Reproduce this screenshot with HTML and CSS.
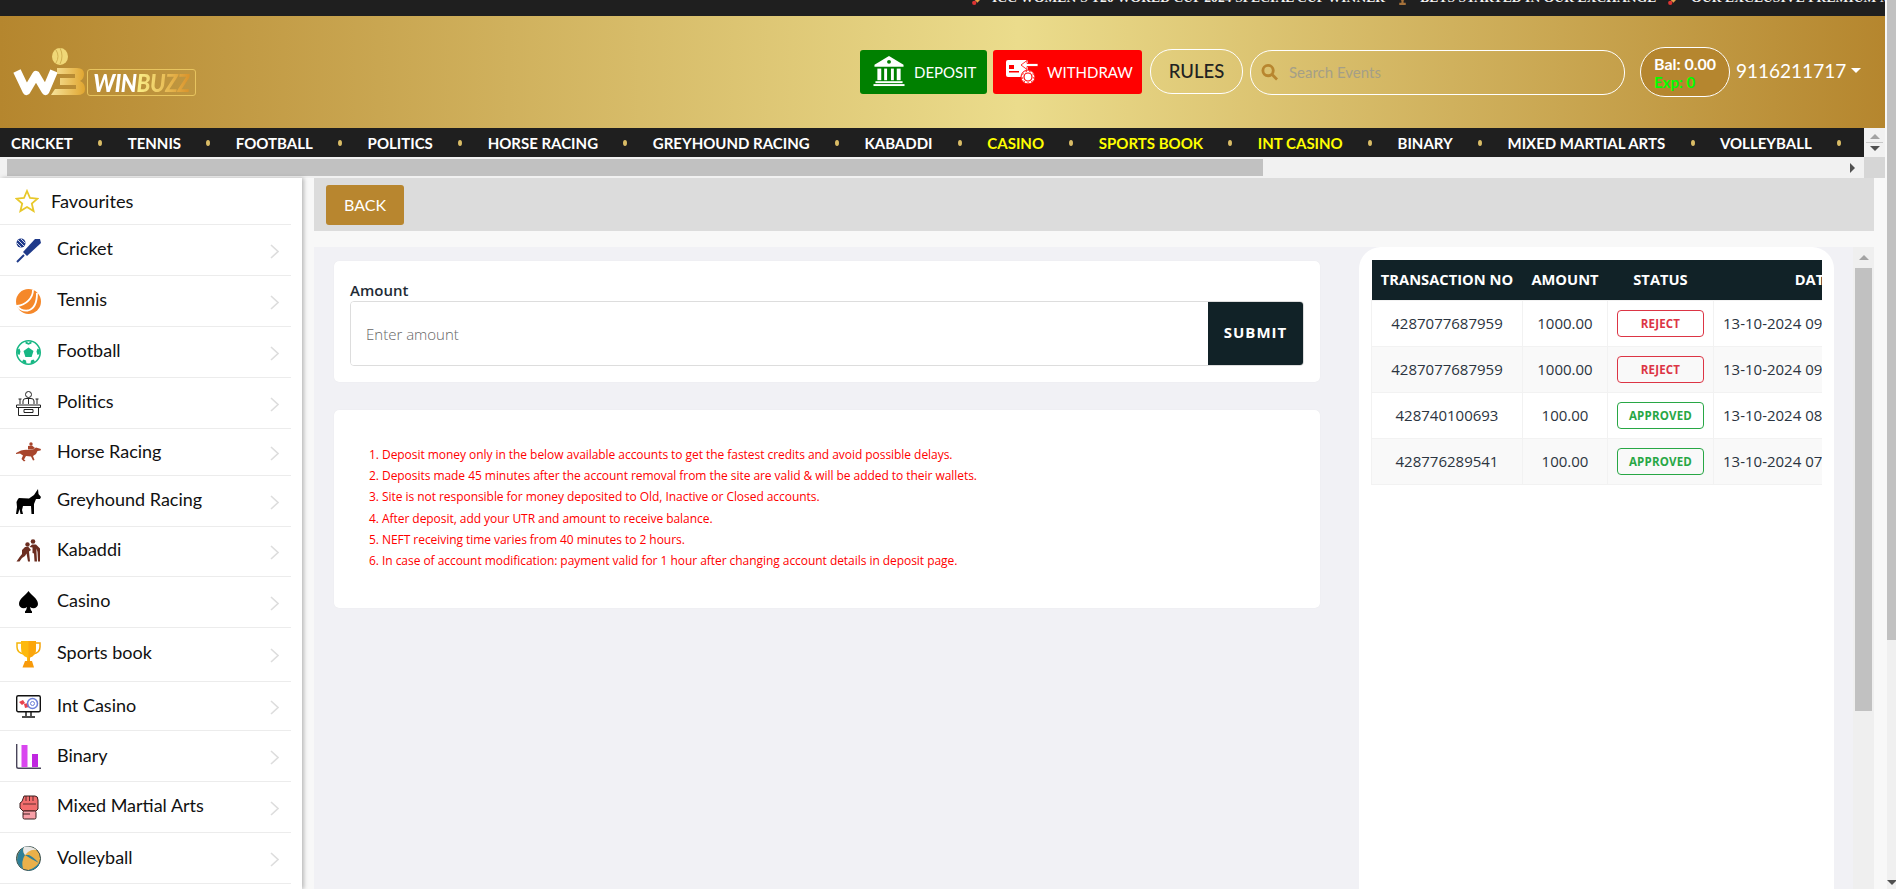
FILE: index.html
```html
<!DOCTYPE html>
<html lang="en">
<head>
<meta charset="utf-8">
<title>Winbuzz - Deposit</title>
<link rel="stylesheet" href="styles.css">
</head>
<body>
<div class="page">
  <div class="topbar">
    <div class="ticker">
      <svg class="tick-ico" viewBox="0 0 12 12"><path d="M9 0 L12 3 L6 10 L2 6Z" fill="#e8a04a"/><circle cx="3" cy="10" r="2" fill="#d33"/></svg>
      <span>ICC WOMEN'S T20 WORLD CUP 2024 SPECIAL CUP WINNER</span>
      <svg class="tick-ico" viewBox="0 0 12 12"><path d="M2 0H10V5L7 8V10H9V12H3V10H5V8L2 5Z" fill="#a5713a"/></svg>
      <span>BETS STARTED IN OUR EXCHANGE</span>
      <svg class="tick-ico" viewBox="0 0 12 12"><path d="M9 0 L12 3 L6 10 L2 6Z" fill="#e8a04a"/><circle cx="3" cy="10" r="2" fill="#d33"/></svg>
      <span>OUR EXCLUSIVE PREMIUM MARKET</span>
    </div>
  </div>

  <header class="header">
    <a class="logo">
      <svg class="logo-mark" viewBox="0 0 74 48">
        <defs>
          <linearGradient id="lg" x1="0" x2="1"><stop offset="0" stop-color="#f7e39a"/><stop offset="1" stop-color="#e0a52f"/></linearGradient>
        </defs>
        <ellipse cx="47" cy="8.500" rx="8" ry="8.500" fill="#f0d878"/>
        <path d="M43 2Q47 8 43 15M47 0Q51 8 47 16" stroke="#c9a648" fill="none" stroke-width=".8"/>
        <polyline points="4,23 13.500,43 23,27 32.500,43 41,23" fill="none" stroke="#fff" stroke-width="8" stroke-linejoin="round"/>
        <path d="M44 20H64Q71 20 71 26Q71 31 67 33Q72 35 72 41Q72 47 64 47H38L42 41H63V37H47V30H62V26H44Z" fill="url(#lg)"/>
      </svg>
      <span class="logo-frame"><span class="logo-text"><span class="logo-win">WIN</span><span class="logo-buzz">BUZZ</span></span></span>
    </a>
    <div class="actions">
      <a class="cash cash-green">
        <svg class="cash-ico" viewBox="0 0 32 32" fill="#fff"><path d="M16 0L31 9V11H1V9Z"/><rect x="4" y="13" width="4" height="12"/><rect x="11" y="13" width="3" height="12"/><rect x="18" y="13" width="3" height="12"/><rect x="24" y="13" width="4" height="12"/><rect x="2" y="26" width="28" height="2"/><rect x="0" y="29" width="32" height="2"/><circle cx="16" cy="6" r="2" fill="#008000"/></svg>
        DEPOSIT
      </a>
      <a class="cash cash-red">
        <svg class="cash-ico-w" viewBox="0 0 32 24" fill="#fff"><rect x="0" y="0" width="22" height="17" rx="2"/><rect x="3" y="5" width="5" height="4" fill="#f00"/><rect x="3" y="11" width="10" height="1.500" fill="#f00"/><path d="M15 5L21 .5V3.500H32V6.500H21V9.500Z" stroke="#f00" stroke-width=".8"/><circle cx="22" cy="17" r="7" stroke="#f00"/><circle cx="22" cy="17" r="4" fill="none" stroke="#f00" stroke-width="1.200"/><circle cx="22" cy="17" r="5.800" fill="none" stroke="#f00" stroke-width="1" stroke-dasharray="1.500 2.500"/></svg>
        WITHDRAW
      </a>
      <a class="rules">RULES</a>
      <label class="search">
        <svg class="search-ico" viewBox="0 0 18 18"><circle cx="7.500" cy="7.500" r="5.500" fill="none" stroke="#b8862f" stroke-width="3"/><path d="M12 12L17 17" stroke="#b8862f" stroke-width="3"/></svg>
        <input class="search-input" placeholder="Search Events">
      </label>
      <div class="balance"><span class="bal">Bal: 0.00</span><span class="exp">Exp: 0</span></div>
      <a class="user">9116211717<i class="caret"></i></a>
    </div>
  </header>

  <div class="nav-row">
    <nav class="nav">
      <a>CRICKET</a><i></i><a>TENNIS</a><i></i><a>FOOTBALL</a><i></i><a>POLITICS</a><i></i><a>HORSE RACING</a><i></i><a>GREYHOUND RACING</a><i></i><a>KABADDI</a><i></i><a class="hot">CASINO</a><i></i><a class="hot">SPORTS BOOK</a><i></i><a class="hot">INT CASINO</a><i></i><a>BINARY</a><i></i><a>MIXED MARTIAL ARTS</a><i></i><a>VOLLEYBALL</a><i></i>
    </nav>
    <div class="nav-spin"><b class="up"></b><span></span><b class="down"></b></div>
  </div>
  <div class="hscroll">
    <div class="htrack"><div class="hthumb"></div><b class="right"></b></div>
    <div class="corner"></div>
  </div>

  <div class="body">
    <aside class="side">
      <a class="fav">
        <svg class="star" viewBox="0 0 24 24"><path d="M12 2L15 9L22.500 9.700L16.800 14.500L18.600 22L12 18L5.400 22L7.200 14.500L1.500 9.700L9 9Z" fill="none" stroke="#e8c82a" stroke-width="1.800"/></svg>
        <span>Favourites</span>
      </a>
      <a class="row"><svg class="ico" viewBox="0 0 25 25"><path d="M24 1L25 5L11 18L7 14L19 1Z" fill="#1f3a8a"/><path d="M8 17L1 24" stroke="#1f3a8a" stroke-width="2"/><circle cx="5" cy="5" r="4.500" fill="#1f3a8a"/><path d="M2 2L8 8M1 5L5 9M5 1L9 5" stroke="#fff" stroke-width=".8"/></svg><span class="lbl">Cricket</span><svg class="chev" viewBox="0 0 9 15"><path d="M1 1L8 7.500L1 14" fill="none" stroke="#ddd" stroke-width="1.600"/></svg></a>
      <a class="row"><svg class="ico" viewBox="0 0 25 25"><circle cx="12.500" cy="12.500" r="12.500" fill="#f5882a"/><path d="M17 1C17 9 10 16 1 17C4 21 8 22 12 21.500C18 20 21 14 21 4" fill="none" stroke="#fff" stroke-width="1.800"/></svg><span class="lbl">Tennis</span><svg class="chev" viewBox="0 0 9 15"><path d="M1 1L8 7.500L1 14" fill="none" stroke="#ddd" stroke-width="1.600"/></svg></a>
      <a class="row"><svg class="ico" viewBox="0 0 25 25"><circle cx="12.500" cy="12.500" r="11.700" fill="#fff" stroke="#17b784" stroke-width="1.600"/><path d="M12.500 7.500L17.500 11L15.600 17H9.400L7.500 11Z M9.500 1L12.500 3L15.500 1L15.500 3.500L12.500 4.800L9.500 3.500Z M1 10L3.500 8.500L4.500 11.500L3.500 15L1.500 14Z M24 10L21.500 8.500L20.500 11.500L21.500 15L23.500 14Z M6 21.500L7.500 19.500L10 20.500L10.500 23.500H8.500Z M19 21.500L17.500 19.500L15 20.500L14.500 23.500H16.500Z" fill="#17b784"/></svg><span class="lbl">Football</span><svg class="chev" viewBox="0 0 9 15"><path d="M1 1L8 7.500L1 14" fill="none" stroke="#ddd" stroke-width="1.600"/></svg></a>
      <a class="row"><svg class="ico" viewBox="0 0 25 25" fill="none" stroke="#222" stroke-width="1"><circle cx="12.500" cy="3.500" r="3"/><path d="M7 13V10Q7 7.500 10 7.500H15Q18 7.500 18 10V13M12.500 8V13M4 8V13M21 8V13M2.500 8L5.500 8M19.500 8L22.500 8"/><path d="M.500 14H24.500V16.500H.500ZM2.500 16.500V24.500H22.500V16.500M8 18.500H17V21.500H8Z"/></svg><span class="lbl">Politics</span><svg class="chev" viewBox="0 0 9 15"><path d="M1 1L8 7.500L1 14" fill="none" stroke="#ddd" stroke-width="1.600"/></svg></a>
      <a class="row row-47"><svg class="ico" viewBox="0 0 25 25" fill="#a8452c"><path d="M0 13L5 10.500Q9 9.500 13 10L17 9.500L20 7.500L25 9L24.500 10.500L21.500 11L20 14L17 16L18.500 20L17 20.500L15 16.500L10 16L8 19.500L9.500 20.500L8 21.500L5.500 19L7 15.500L4 13.500L0 14Z"/><circle cx="15" cy="4" r="1.700"/><path d="M12 6L16 5.500L19 8L16.500 9.500L12 9.500Z"/></svg><span class="lbl lbl-mid">Horse Racing</span><svg class="chev" viewBox="0 0 9 15"><path d="M1 1L8 7.500L1 14" fill="none" stroke="#ddd" stroke-width="1.600"/></svg></a>
      <a class="row"><svg class="ico" viewBox="0 0 25 25" fill="#000"><path d="M18 6L22 0L22.500 5L25 8L24 10L20 10L18 15V25H15.500L15 17H7L6 21L7 25H4.500L3.500 20L2 25H0L1 18L0.500 13L2 10L3 9L13 9.500Z"/></svg><span class="lbl">Greyhound Racing</span><svg class="chev" viewBox="0 0 9 15"><path d="M1 1L8 7.500L1 14" fill="none" stroke="#ddd" stroke-width="1.600"/></svg></a>
      <a class="row row-50"><svg class="ico" viewBox="0 0 25 25" fill="#6b2d20"><circle cx="17" cy="2.500" r="2.300"/><circle cx="11.500" cy="5.500" r="2.200"/><path d="M13.500 8L16 5.500H20L24 9.500V22.500H22L21.500 13L20.500 9.500V13L21 22.500H18.500L18 14.500L16.500 14V8.500Z"/><path d="M12.500 8L15 11L13 12.500L14 22.500H12L10.500 14.500L9 17L6 19L3.500 22.500H0.500L4 17.500L6 15V11L9 8Z"/></svg><span class="lbl">Kabaddi</span><svg class="chev" viewBox="0 0 9 15"><path d="M1 1L8 7.500L1 14" fill="none" stroke="#ddd" stroke-width="1.600"/></svg></a>
      <a class="row"><svg class="ico" viewBox="0 0 25 25" fill="#000"><path d="M12.500 1C15 5 22 8.500 22 14C22 18 17 19.500 14 17Q14.500 20 16 21.500V23H9V21.500Q10.500 20 11 17C8 19.500 3 18 3 14C3 8.500 10 5 12.500 1Z"/></svg><span class="lbl">Casino</span><svg class="chev" viewBox="0 0 9 15"><path d="M1 1L8 7.500L1 14" fill="none" stroke="#ddd" stroke-width="1.600"/></svg></a>
      <a class="row row-54"><svg class="ico ico-tall" viewBox="0 0 25 27"><path d="M5 2H1V6Q1 12 8 13" fill="none" stroke="#f5b50a" stroke-width="1.500"/><path d="M20 2H24V6Q24 12 17 13" fill="none" stroke="#f5a40a" stroke-width="1.500"/><path d="M5 0H20V7Q20 15 14 16.500V20H11V16.500Q5 15 5 7Z" fill="#fdb90e"/><path d="M12.500 0H20V7Q20 15 14 16.500V20H12.500Z" fill="#fba60c"/><path d="M9 20H16L18 26.500H6.500Z" fill="#f79a0a"/></svg><span class="lbl">Sports book</span><svg class="chev" viewBox="0 0 9 15"><path d="M1 1L8 7.500L1 14" fill="none" stroke="#ddd" stroke-width="1.600"/></svg></a>
      <a class="row row-49"><svg class="ico" viewBox="0 0 25 25"><rect x=".700" y="1.700" width="23.600" height="16" rx="1.500" fill="#fff" stroke="#111" stroke-width="1.400"/><path d="M3 8L7 6L9 9L6 11ZM8 10L12 9L13 13L9 14Z" fill="#e8434f"/><circle cx="16.500" cy="9.500" r="5" fill="none" stroke="#6d7fd8" stroke-width="1.500"/><circle cx="16.500" cy="9.500" r="2" fill="none" stroke="#6d7fd8"/><path d="M10 18V22M15 18V22M6 23H19" stroke="#111" stroke-width="1.400"/></svg><span class="lbl lbl-mid">Int Casino</span><svg class="chev" viewBox="0 0 9 15"><path d="M1 1L8 7.500L1 14" fill="none" stroke="#ddd" stroke-width="1.600"/></svg></a>
      <a class="row"><svg class="ico" viewBox="0 0 25 25"><path d="M.700 0V22.500Q.700 24.300 2.500 24.300H25" fill="none" stroke="#49455a" stroke-width="1.400"/><rect x="5.500" y="1" width="6" height="22" fill="#d946ef"/><rect x="16" y="10" width="6" height="13" fill="#c026e0"/></svg><span class="lbl lbl-mid">Binary</span><svg class="chev" viewBox="0 0 9 15"><path d="M1 1L8 7.500L1 14" fill="none" stroke="#ddd" stroke-width="1.600"/></svg></a>
      <a class="row"><svg class="ico" viewBox="0 0 25 25"><path d="M8 1H19Q22 1 22 5V14L20 16H7L4 13V8L6 6.500Z" fill="#f26d6d" stroke="#3a1f1f"/><path d="M10 1V6M13.500 1V6M17 1V6M7 9H20" stroke="#3a1f1f" stroke-width=".8"/><rect x="7" y="16" width="13" height="8" rx="1.500" fill="#f8a0a8" stroke="#3a1f1f"/><path d="M7 19H14" stroke="#3a1f1f"/></svg><span class="lbl">Mixed Martial Arts</span><svg class="chev" viewBox="0 0 9 15"><path d="M1 1L8 7.500L1 14" fill="none" stroke="#ddd" stroke-width="1.600"/></svg></a>
      <a class="row"><svg class="ico" viewBox="0 0 25 25"><circle cx="12.500" cy="12.500" r="12" fill="#eab04a" stroke="#24454f"/><path d="M8 1Q1 6 1 14Q2 20 7 23Q5 15 9 9Q6 5 8 1Z" fill="#2d7f99"/><path d="M23 17Q18 23 11 24.500Q19 25 23 19ZM9 9Q15 13 23 17Q16 10 13 9Z" fill="#2d7f99"/><path d="M8 1Q14 -1 21 4Q16 3 12 6L9 9Q6 5 8 1Z" fill="#e8e8e8"/></svg><span class="lbl lbl-mid">Volleyball</span><svg class="chev" viewBox="0 0 9 15"><path d="M1 1L8 7.500L1 14" fill="none" stroke="#ddd" stroke-width="1.600"/></svg></a>
    </aside>

    <main class="main">
      <div class="backbar"><a class="back">BACK</a></div>
      <div class="content">
        <section class="left">
          <form class="card card-amount">
            <label class="amount-label">Amount</label>
            <div class="amount-group">
              <input class="amount-input" placeholder="Enter amount">
              <button class="submit" type="button">SUBMIT</button>
            </div>
          </form>
          <div class="card card-notes">
            <ol class="notes">
              <li>Deposit money only in the below available accounts to get the fastest credits and avoid possible delays.</li>
              <li>Deposits made 45 minutes after the account removal from the site are valid &amp; will be added to their wallets.</li>
              <li>Site is not responsible for money deposited to Old, Inactive or Closed accounts.</li>
              <li>After deposit, add your UTR and amount to receive balance.</li>
              <li>NEFT receiving time varies from 40 minutes to 2 hours.</li>
              <li>In case of account modification: payment valid for 1 hour after changing account details in deposit page.</li>
            </ol>
          </div>
        </section>
        <section class="tx-card">
          <div class="tx-wrap">
            <table class="tx">
              <thead><tr><th class="c1">TRANSACTION NO</th><th class="c2">AMOUNT</th><th class="c3">STATUS</th><th class="c4">DATE</th></tr></thead>
              <tbody>
                <tr><td>4287077687959</td><td>1000.00</td><td><span class="badge reject">REJECT</span></td><td>13-10-2024 09:42:18 PM</td></tr>
                <tr><td>4287077687959</td><td>1000.00</td><td><span class="badge reject">REJECT</span></td><td>13-10-2024 09:40:51 PM</td></tr>
                <tr><td>428740100693</td><td>100.00</td><td><span class="badge approved">APPROVED</span></td><td>13-10-2024 08:16:05 PM</td></tr>
                <tr><td>428776289541</td><td>100.00</td><td><span class="badge approved">APPROVED</span></td><td>13-10-2024 07:33:27 PM</td></tr>
              </tbody>
            </table>
          </div>
        </section>
        <div class="vscroll"><b class="up"></b><div class="vthumb"></div></div>
      </div>
    </main>
  </div>
</div>
<div class="page-scroll"><div class="page-thumb"></div><b class="down"></b></div>
</body>
</html>
```
FILE: styles.css
```css
* { box-sizing: border-box; }
html, body { margin: 0; height: 889px; overflow: hidden; }
body { display: flex; width: 1896px; background: #f8f8f8; font-family: "Lato", sans-serif; color: #111; }
a { color: inherit; text-decoration: none; }
input, button { font: inherit; }

.page { flex: 0 0 1885px; display: flex; flex-direction: column; height: 889px; overflow: hidden; }
.page-scroll { flex: 1; margin-left: 2px; background: #f0f0f0; position: relative; display: flex; flex-direction: column; justify-content: space-between; }
.page-thumb { height: 640px; background: #c1c1c1; }

.up, .down, .right { display: block; width: 0; height: 0; border-style: solid; border-color: transparent; }
.up { border-width: 0 5px 5px; border-bottom-color: #a3a3a3; }
.down { border-width: 5px 5px 0; border-top-color: #505050; }
.right { border-width: 5px 0 5px 5px; border-left-color: #505050; }
.page-scroll .down { margin: 0 0 4px 0; }

.topbar { height: 16px; background: #1f1f1f; overflow: hidden; flex: none; }
.ticker { display: flex; align-items: center; gap: 11px; height: 16px; margin-top: -10px; padding-left: 971px; white-space: nowrap; font: bold 13.500px "Liberation Serif", serif; letter-spacing: .1px; color: #f2f2f2; }
.ticker .tick-ico:first-child { margin-right: -3px; }
.tick-ico { width: 13px; height: 13px; flex: none; }

.header { height: 112px; flex: none; display: flex; align-items: center; justify-content: space-between; background: linear-gradient(to right, #b5862e 0%, #ebdc8c 54%, #b5862e 100%); }
.logo { display: flex; align-items: flex-end; margin: 0 0 0 13px; height: 48px; }
.logo-mark { width: 74px; height: 48px; display: block; }
.logo-frame { width: 109px; height: 27px; border: 1px solid #e7c45f; border-radius: 3px; display: flex; justify-content: center; overflow: hidden; }
.logo-text { display: block; flex: none; font: italic 900 25px/25px "Lato", sans-serif; letter-spacing: -.5px; transform: scaleX(.9); }
.logo-win { color: #fff; }
.logo-buzz { background: linear-gradient(to right, #fbf08a, #d9932b); -webkit-background-clip: text; background-clip: text; color: transparent; }

.actions { display: flex; align-items: center; margin-right: 25px; }
.cash { height: 44px; display: flex; align-items: center; border-radius: 3px; color: #fff; font-size: 15px; margin-top: -1px; }
.cash-green { width: 127px; background: #008000; padding-left: 13px; gap: 9px; }
.cash-red { width: 149px; background: #f00; padding-left: 13px; gap: 9px; margin-left: 6px; }
.cash-ico { width: 32px; height: 31px; flex: none; }
.cash-ico-w { width: 32px; height: 24px; flex: none; }
.rules { width: 93px; height: 45px; margin-left: 8px; margin-top: -2px; border: 1px solid #fff; border-radius: 22px; display: flex; align-items: center; justify-content: center; font-size: 18.500px; font-weight: 500; color: #222; }
.search { width: 375px; height: 45px; margin-left: 7px; border: 1px solid #fff; border-radius: 22px; display: flex; align-items: center; padding-left: 10px; gap: 11px; }
.search-ico { width: 17px; height: 18px; flex: none; }
.search-input { border: 0; outline: 0; background: none; flex: 1; font-size: 15px; min-width: 0; padding: 0; }
.search-input::placeholder { color: #a59f87; opacity: 1; }
.balance { width: 90px; height: 50px; margin-left: 15px; border: 1px solid #fff; border-radius: 25px; background: #b5862f; display: flex; flex-direction: column; padding: 2px 0 0 13px; justify-content: center; line-height: 19px; font-size: 15px; font-weight: 700; }
.bal { color: #fff; font-size: 16px; }
.exp { color: #0f0; font-weight: 700; }
.user { display: flex; align-items: center; margin-left: 6px; margin-top: -3px; font-size: 19px; color: #fff; width: 124px; }
.caret { margin-left: 5px; width: 0; height: 0; border-style: solid; border-width: 5px 5px 0; border-color: #fff transparent transparent; }

.nav-row { height: 29px; flex: none; display: flex; }
.nav { flex: 1; min-width: 0; background: #1f1f1f; display: flex; align-items: center; gap: 25.400px; padding-left: 11px; overflow: hidden; white-space: nowrap; font-size: 15px; font-weight: 700; color: #fff; }
.nav a { flex: none; }
.nav i { flex: none; width: 4px; height: 6px; border-radius: 50%; background: #d9bc66; }
.nav .hot { color: #ff0; }
.nav-spin { flex: 0 0 21px; background: #f1f1f1; display: flex; flex-direction: column; align-items: center; justify-content: center; gap: 3px; }
.nav-spin span { width: 17px; height: 1px; background: #c8c8c8; }
.hscroll { height: 21px; flex: none; display: flex; }
.htrack { flex: 1; background: #f1f1f1; padding: 2px 0 2px 7px; display: flex; align-items: center; position: relative; }
.hthumb { width: 1256px; height: 17px; background: #c1c1c1; }
.right { position: absolute; right: 9px; top: 6px; }
.corner { flex: 0 0 21px; background: #d6d6d6; }

.body { flex: 1; display: flex; min-height: 0; }
.side { flex: 0 0 302px; background: #fff; box-shadow: 2px 0 4px rgba(0,0,0,.25); position: relative; z-index: 1; padding-right: 11px; overflow: hidden; }
.fav { height: 47px; display: flex; align-items: center; padding-left: 15px; gap: 12px; border-bottom: 1px solid #ececec; font-size: 18.200px; }
.star { width: 24px; height: 24px; flex: none; }
.row { height: 51px; display: flex; align-items: center; padding-left: 16px; border-bottom: 1px solid #ececec; font-size: 18px; }
.row-47 { height: 47px; }
.row-50 { height: 50px; }
.row-54 { height: 54px; }
.row-49 { height: 49px; }
.ico { width: 25px; height: 25px; flex: none; }
.ico-tall { height: 27px; }
.lbl { flex: 1; margin-left: 16px; padding-bottom: 5px; }
.lbl-mid { padding-bottom: 3px; }
.chev { width: 9px; height: 15px; flex: none; margin-right: 12px; margin-top: 2px; }

.main { flex: 0 0 1560px; margin-left: 12px; display: flex; flex-direction: column; min-height: 0; }
.backbar { height: 53px; flex: none; background: #dcdcdc; padding: 7px 12px; }
.back { display: flex; align-items: center; justify-content: center; width: 78px; height: 40px; padding-bottom: 2px; background: #b8862f; border-radius: 3px; color: #fff; font-size: 16px; }
.content { flex: 1; min-height: 0; margin-top: 16px; background: #f1f1f5; display: flex; }
.left { flex: 0 0 1045px; padding: 14px 39px 0 20px; font-family: "Open Sans", sans-serif; }
.card { background: #fff; border-radius: 5px; box-shadow: 0 0 1px rgba(0,0,0,.08); }
.card-amount { height: 121px; padding: 19px 16px 0; }
.amount-label { display: block; font-size: 15px; font-weight: 600; line-height: 21px; color: #222b35; }
.amount-group { height: 65px; display: flex; border: 1px solid #ddd; border-radius: 4px; overflow: hidden; }
.amount-input { flex: 1; min-width: 0; border: 0; outline: 0; padding: 0 15px 0; font-size: 15px; font-weight: 300; }
.amount-input::placeholder { color: #666; opacity: 1; }
.submit { flex: 0 0 95px; border: 0; background: #112227; color: #fff; font-size: 15px; font-weight: 700; letter-spacing: 1px; padding: 0 0 3px; }
.card-notes { margin-top: 28px; height: 198px; padding: 34px 0 0 35px; }
.notes { margin: 0; padding: 0; list-style: decimal inside; font-size: 12px; line-height: 21.200px; color: #f00; letter-spacing: -.05px; }

.tx-card { flex: 0 0 475px; background: #fff; border-radius: 22px 22px 0 0; padding: 13px 12px 0; font-family: "Open Sans", sans-serif; }
.tx-wrap { width: 451px; overflow: hidden; }
.tx { table-layout: fixed; width: 542px; border-collapse: collapse; font-size: 15px; text-align: center; }
.c1 { width: 151px; }
.c2 { width: 85px; }
.c3 { width: 106px; }
.c4 { width: 200px; }
.tx th { height: 40px; padding: 0 0 2px; background: #112227; color: #fff; font-size: 14.700px; font-weight: 700; }
.tx td { height: 46px; padding: 0; border: 1px solid #f2f2f2; color: #2b3440; white-space: nowrap; overflow: hidden; }
.tx td:last-child { text-align: left; padding-left: 9px; }
.tx tbody tr:nth-child(even) { background: #f9f9f9; }
.badge { display: block; width: 87px; height: 27px; margin: 0 auto; border: 1px solid; border-radius: 4px; font-size: 11.500px; font-weight: 700; line-height: 26px; letter-spacing: .2px; }
.reject { color: #dc3545; border-color: #dc3545; }
.approved { color: #28a745; border-color: #28a745; }

.vscroll { flex: 0 0 21px; margin-left: 19px; background: #efefef; padding: 0 2px; display: flex; flex-direction: column; align-items: center; }
.vscroll .up { margin: 8px 0 8px; }
.vthumb { width: 17px; height: 443px; background: #c1c1c1; }
```
